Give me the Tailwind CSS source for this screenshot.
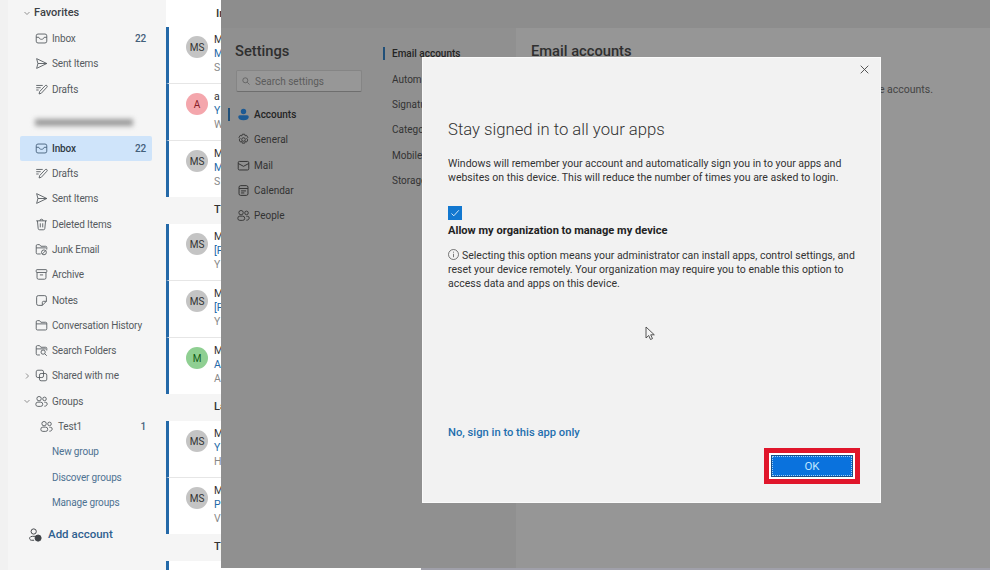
<!DOCTYPE html>
<html lang="en">

<head>
    <meta charset="UTF-8">
    <title>Settings</title>
    <script src="https://cdn.jsdelivr.net/npm/@tailwindcss/browser@4"></script>
</head>

<body class="bg-white overflow-hidden">
    <!-- icon set -->
    <svg class="hidden">
        <symbol id="i-inbox" viewBox="0 0 16 16" fill="none" stroke="currentColor" stroke-width="1.1">
            <rect x="1.5" y="2.5" width="13" height="11" rx="2.2" />
            <path d="M1.5 6.5h3.2c.4 1.6 1.7 2.5 3.3 2.5s2.9-.9 3.3-2.5h3.2" />
        </symbol>
        <symbol id="i-send" viewBox="0 0 16 16" fill="none" stroke="currentColor" stroke-width="1.1" stroke-linejoin="round">
            <path d="M2 2l12.5 6L2 14l1.6-6zM3.6 8h10.9" />
        </symbol>
        <symbol id="i-draft" viewBox="0 0 16 16" fill="none" stroke="currentColor" stroke-width="1.1" stroke-linejoin="round">
            <path d="M1.5 3h8M1.5 5.8h5.5M1.5 8.6h3M5 13.5l.8-3L12.6 3.2a1.4 1.4 0 0 1 2 2L7.8 12.6z" />
        </symbol>
        <symbol id="i-trash" viewBox="0 0 16 16" fill="none" stroke="currentColor" stroke-width="1.1">
            <path d="M1.5 3.5h13M6 3.5a2 2 0 0 1 4 0M3 3.5l.9 9.3a1.8 1.8 0 0 0 1.8 1.7h4.6a1.8 1.8 0 0 0 1.8-1.7l.9-9.3M6.5 6.5v5M9.5 6.5v5" />
        </symbol>
        <symbol id="i-junk" viewBox="0 0 16 16" fill="none" stroke="currentColor" stroke-width="1.1">
            <path d="M7 13.5H3A1.5 1.5 0 0 1 1.5 12V3.5A1.5 1.5 0 0 1 3 2h2.6l1.6 2h5.8a1.5 1.5 0 0 1 1.5 1.5V8M1.5 6h12" />
            <circle cx="11" cy="11.5" r="3" />
            <path d="M9 13.5l4-4" />
        </symbol>
        <symbol id="i-archive" viewBox="0 0 16 16" fill="none" stroke="currentColor" stroke-width="1.1">
            <rect x="1.5" y="2" width="13" height="3.5" rx="1" />
            <path d="M2.5 5.5v6.5A1.8 1.8 0 0 0 4.300 13.800h7.400A1.800 1.800 0 0 0 13.500 12V5.500M6 8.500h4" />
        </symbol>
        <symbol id="i-note" viewBox="0 0 16 16" fill="none" stroke="currentColor" stroke-width="1.1" stroke-linejoin="round">
            <path d="M4 2h8a2 2 0 0 1 2 2v5l-5 5H4a2 2 0 0 1-2-2V4a2 2 0 0 1 2-2zM14 9h-3.500A1.500 1.500 0 0 0 9 10.500V14" />
        </symbol>
        <symbol id="i-folder" viewBox="0 0 16 16" fill="none" stroke="currentColor" stroke-width="1.1">
            <path d="M3 2h2.600l1.600 2h5.800a1.500 1.500 0 0 1 1.500 1.500V12a1.500 1.500 0 0 1-1.500 1.500H3A1.500 1.500 0 0 1 1.500 12V3.500A1.500 1.500 0 0 1 3 2zM1.500 6h13" />
        </symbol>
        <symbol id="i-search-folder" viewBox="0 0 16 16" fill="none" stroke="currentColor" stroke-width="1.1">
            <path d="M6 13.500H3A1.500 1.500 0 0 1 1.500 12V3.500A1.500 1.500 0 0 1 3 2h2.600l1.600 2h5.800a1.500 1.500 0 0 1 1.500 1.500V8M1.500 6h12" />
            <circle cx="10" cy="10" r="2.600" />
            <path d="M12 12l2.500 2.500" />
        </symbol>
        <symbol id="i-shared" viewBox="0 0 16 16" fill="none" stroke="currentColor" stroke-width="1.1">
            <rect x="1.500" y="1.500" width="9" height="9" rx="2" />
            <rect x="5.500" y="5.500" width="9" height="9" rx="2" />
        </symbol>
        <symbol id="i-people" viewBox="0 0 16 16" fill="none" stroke="currentColor" stroke-width="1.1">
            <circle cx="5" cy="4.500" r="2.700" />
            <rect x="1" y="8.800" width="8.500" height="5.200" rx="2.500" />
            <circle cx="11.700" cy="4.800" r="2.200" />
            <path d="M11.500 9h1.500a2 2 0 0 1 2 2c0 1.800-1.500 2.800-3.500 2.800" />
        </symbol>
        <symbol id="i-gear" viewBox="0 0 16 16" fill="none" stroke="currentColor" stroke-width="1.1" stroke-linejoin="round">
            <circle cx="8" cy="8" r="2.200" />
            <path d="M6.500 1.500h3l.5 2 1.800-.6 1.500 2.600-1.400 1.500 1.400 1.500-1.500 2.600-1.800-.6-.5 2h-3l-.5-2-1.800.6-1.500-2.600L3.900 7 2.500 5.500 4 2.900l2 .6z" />
        </symbol>
        <symbol id="i-mail" viewBox="0 0 16 16" fill="none" stroke="currentColor" stroke-width="1.2">
            <rect x="1.500" y="3" width="13" height="10.500" rx="1.500" />
            <path d="M1.500 5.500L8 9l6.500-3.500" />
        </symbol>
        <symbol id="i-calendar" viewBox="0 0 16 16" fill="none" stroke="currentColor" stroke-width="1.2">
            <rect x="2.500" y="2" width="11" height="12" rx="2" />
            <path d="M2.500 5.500h11M5 8.500h6M5 11h4" />
        </symbol>
        <symbol id="i-add-account" viewBox="0 0 16 16" fill="none" stroke="currentColor" stroke-width="1.100">
            <circle cx="6.500" cy="4" r="3" />
            <path d="M7 14H4a2.200 2.200 0 0 1-2-3c.5-1 1.500-1.500 3-1.500h3" />
            <circle cx="11.500" cy="11.500" r="3.500" fill="currentColor" />
        </symbol>
        <symbol id="i-chev-down" viewBox="0 0 8 8" fill="none" stroke="currentColor" stroke-width=".8">
            <path d="M1.500 3l2.500 2.500L6.500 3" />
        </symbol>
        <symbol id="i-chev-right" viewBox="0 0 8 8" fill="none" stroke="currentColor" stroke-width=".8">
            <path d="M3 1.500L5.500 4 3 6.500" />
        </symbol>
    </svg>

    <div class="relative w-[990px] h-[570px] overflow-hidden flex font-['Roboto',sans-serif]">

        <!-- folder pane -->
        <aside class="w-[166px] h-full shrink-0 bg-[#f5f5f5] border-l-[8px] border-[#f1f1f1] text-[10px] tracking-[-0.15px] text-[#555b60]">
            <div class="h-[26px] flex items-center pl-[15px] gap-[3px] text-[11px] tracking-normal font-medium text-[#3d4145]">
                <svg class="w-[8px] h-[8px] text-[#777]"><use href="#i-chev-down" /></svg>Favorites
            </div>
            <div class="h-[25.300px] flex items-center pl-[27px] gap-[4px]"><svg class="w-[13px] h-[13px]"><use href="#i-inbox" /></svg><span>Inbox</span><span class="ml-auto mr-[20px] font-medium text-[#44607a]">22</span></div>
            <div class="h-[25.300px] flex items-center pl-[27px] gap-[4px]"><svg class="w-[13px] h-[13px]"><use href="#i-send" /></svg><span>Sent Items</span></div>
            <div class="h-[25.300px] flex items-center pl-[27px] gap-[4px]"><svg class="w-[13px] h-[13px]"><use href="#i-draft" /></svg><span>Drafts</span></div>

            <div class="h-[34px] flex items-center pl-[27px]">
                <div class="w-[98px] h-[7px] bg-[#9a9a9a] blur-[2.500px] mt-[8px]"></div>
            </div>

            <div class="h-[25px] ml-[12px] mr-[14px] flex items-center pl-[15px] gap-[4px] bg-[#cfe4fa] text-[#2f3a44] font-medium rounded-[2px]"><svg class="w-[13px] h-[13px] text-[#44607a]"><use href="#i-inbox" /></svg><span>Inbox</span><span class="ml-auto mr-[6px] text-[#44607a]">22</span></div>
            <div class="h-[25.300px] flex items-center pl-[27px] gap-[4px]"><svg class="w-[13px] h-[13px]"><use href="#i-draft" /></svg><span>Drafts</span></div>
            <div class="h-[25.300px] flex items-center pl-[27px] gap-[4px]"><svg class="w-[13px] h-[13px]"><use href="#i-send" /></svg><span>Sent Items</span></div>
            <div class="h-[25.300px] flex items-center pl-[27px] gap-[4px]"><svg class="w-[13px] h-[13px]"><use href="#i-trash" /></svg><span>Deleted Items</span></div>
            <div class="h-[25.300px] flex items-center pl-[27px] gap-[4px]"><svg class="w-[13px] h-[13px]"><use href="#i-junk" /></svg><span>Junk Email</span></div>
            <div class="h-[25.300px] flex items-center pl-[27px] gap-[4px]"><svg class="w-[13px] h-[13px]"><use href="#i-archive" /></svg><span>Archive</span></div>
            <div class="h-[25.300px] flex items-center pl-[27px] gap-[4px]"><svg class="w-[13px] h-[13px]"><use href="#i-note" /></svg><span>Notes</span></div>
            <div class="h-[25.300px] flex items-center pl-[27px] gap-[4px]"><svg class="w-[13px] h-[13px]"><use href="#i-folder" /></svg><span>Conversation History</span></div>
            <div class="h-[25.300px] flex items-center pl-[27px] gap-[4px]"><svg class="w-[13px] h-[13px]"><use href="#i-search-folder" /></svg><span>Search Folders</span></div>
            <div class="h-[25.300px] flex items-center pl-[15px] gap-[4px]"><svg class="w-[8px] h-[8px] text-[#777]"><use href="#i-chev-right" /></svg><svg class="w-[13px] h-[13px]"><use href="#i-shared" /></svg><span>Shared with me</span></div>
            <div class="h-[25.300px] flex items-center pl-[15px] gap-[4px]"><svg class="w-[8px] h-[8px] text-[#777]"><use href="#i-chev-down" /></svg><svg class="w-[13px] h-[13px]"><use href="#i-people" /></svg><span>Groups</span></div>
            <div class="h-[25.300px] flex items-center pl-[32px] gap-[5px]"><svg class="w-[13px] h-[13px]"><use href="#i-people" /></svg><span>Test1</span><span class="ml-auto mr-[20px] font-medium text-[#44607a]">1</span></div>
            <div class="h-[25.300px] flex items-center pl-[44px] text-[#4e7292]">New group</div>
            <div class="h-[25.300px] flex items-center pl-[44px] text-[#4e7292]">Discover groups</div>
            <div class="h-[25.300px] flex items-center pl-[44px] text-[#4e7292]">Manage groups</div>
            <div class="mt-[4px] h-[32px] flex items-center pl-[20px] gap-[6px] text-[11.500px] tracking-normal font-medium text-[#2f5f8f]"><svg class="w-[14px] h-[14px] text-[#3f4347]"><use href="#i-add-account" /></svg>Add account</div>
        </aside>

        <!-- message list, mostly behind the settings overlay -->
        <main class="flex-1 flex flex-col text-[10.500px] text-[#333]">
            <div class="h-[27px] flex items-center pl-[50px] text-[11.500px] font-medium">Inbox</div>

            <div class="h-[57px] flex border-l-[3px] border-[#2469a8] border-b border-b-[#e6e6e6]"><div class="w-[22px] h-[22px] ml-[17px] mt-[9px] rounded-full bg-[#c4c4c4] flex items-center justify-center text-[10px]">MS</div><div class="ml-[6px] pt-[6px] leading-[14px]"><div>M</div><div class="text-[#2469a8]">M</div><div class="text-[#888]">S</div></div></div>
            <div class="h-[57px] flex border-l-[3px] border-[#2469a8] border-b border-b-[#e6e6e6]"><div class="w-[22px] h-[22px] ml-[17px] mt-[9px] rounded-full bg-[#f4a6ac] flex items-center justify-center text-[10px] text-[#8a2028]">A</div><div class="ml-[6px] pt-[6px] leading-[14px]"><div>a</div><div class="text-[#2469a8]">Y</div><div class="text-[#888]">W</div></div></div>
            <div class="h-[56px] flex border-l-[3px] border-[#2469a8]"><div class="w-[22px] h-[22px] ml-[17px] mt-[9px] rounded-full bg-[#c4c4c4] flex items-center justify-center text-[10px]">MS</div><div class="ml-[6px] pt-[6px] leading-[14px]"><div>M</div><div class="text-[#2469a8]">M</div><div class="text-[#888]">S</div></div></div>
            <div class="h-[27px] flex items-center pl-[48px] bg-[#f5f5f5] text-[11px] font-medium">Th</div>

            <div class="h-[57px] flex border-l-[3px] border-[#2469a8] border-b border-b-[#e6e6e6]"><div class="w-[22px] h-[22px] ml-[17px] mt-[9px] rounded-full bg-[#c4c4c4] flex items-center justify-center text-[10px]">MS</div><div class="ml-[6px] pt-[6px] leading-[14px]"><div>M</div><div class="text-[#2469a8]">[F</div><div class="text-[#888]">Y</div></div></div>
            <div class="h-[57px] flex border-l-[3px] border-[#2469a8] border-b border-b-[#e6e6e6]"><div class="w-[22px] h-[22px] ml-[17px] mt-[9px] rounded-full bg-[#c4c4c4] flex items-center justify-center text-[10px]">MS</div><div class="ml-[6px] pt-[6px] leading-[14px]"><div>M</div><div class="text-[#2469a8]">[F</div><div class="text-[#888]">Y</div></div></div>
            <div class="h-[56px] flex border-l-[3px] border-[#2469a8]"><div class="w-[22px] h-[22px] ml-[17px] mt-[9px] rounded-full bg-[#8fcf92] flex items-center justify-center text-[10px] text-[#145c18]">M</div><div class="ml-[6px] pt-[6px] leading-[14px]"><div>M</div><div class="text-[#2469a8]">A</div><div class="text-[#888]">A</div></div></div>
            <div class="h-[27px] flex items-center pl-[48px] bg-[#f5f5f5] text-[11px] font-medium">La</div>

            <div class="h-[57px] flex border-l-[3px] border-[#2469a8] border-b border-b-[#e6e6e6]"><div class="w-[22px] h-[22px] ml-[17px] mt-[9px] rounded-full bg-[#c4c4c4] flex items-center justify-center text-[10px]">MS</div><div class="ml-[6px] pt-[6px] leading-[14px]"><div>M</div><div class="text-[#2469a8]">Y</div><div class="text-[#888]">H</div></div></div>
            <div class="h-[56px] flex border-l-[3px] border-[#2469a8]"><div class="w-[22px] h-[22px] ml-[17px] mt-[9px] rounded-full bg-[#c4c4c4] flex items-center justify-center text-[10px]">MS</div><div class="ml-[6px] pt-[6px] leading-[14px]"><div>M</div><div class="text-[#2469a8]">P</div><div class="text-[#888]">V</div></div></div>
            <div class="h-[27px] flex items-center pl-[48px] bg-[#f5f5f5] text-[11px] font-medium">Th</div>
            <div class="flex-1 border-l-[3px] border-[#2469a8]"></div>
        </main>

        <!-- settings overlay -->
        <div class="absolute left-[221px] top-0 w-[769px] h-[568px] bg-[#909090] flex flex-col text-[#333]">
            <div class="h-[28px] shrink-0 bg-[#8d8d8d]"></div>
            <div class="flex-1 flex">
                <div class="w-[154px] shrink-0 pl-[14px]">
                    <div class="mt-[13px] text-[14.700px] leading-[20px] font-medium text-[#2f2f2f]">Settings</div>
                    <div class="mt-[9px] ml-[1px] w-[126px] h-[22px] bg-[#979797] border border-[#858585] border-b-[#6e6e6e] rounded-[2px] flex items-center pl-[5px] gap-[5px] text-[10px] text-[#5c5c5c]">
                        <svg class="w-[8px] h-[8px]" viewBox="0 0 8 8" fill="none" stroke="currentColor" stroke-width=".8"><circle cx="3.300" cy="3.300" r="2.500" /><path d="M5.200 5.200L7.500 7.500" /></svg>
                        Search settings
                    </div>
                    <div class="mt-[10px] -ml-[7px] h-[25.300px] flex items-center text-[10px] font-medium text-[#242424]">
                        <div class="w-[2px] h-[13px] bg-[#204f78] mr-[7px]"></div>
                        <svg class="w-[13px] h-[13px] text-[#1c5a94] mr-[4px]" viewBox="0 0 16 16" fill="currentColor"><circle cx="8" cy="4.300" r="3.300" /><path d="M3.500 9h9a2 2 0 0 1 2 2c0 2.500-2.800 4-6.500 4s-6.500-1.500-6.500-4a2 2 0 0 1 2-2z" /></svg>
                        Accounts
                    </div>
                    <div class="h-[25.300px] flex items-center pl-[2px] text-[10px]"><svg class="w-[13px] h-[13px] mr-[4px]"><use href="#i-gear" /></svg>General</div>
                    <div class="h-[25.300px] flex items-center pl-[2px] text-[10px]"><svg class="w-[13px] h-[13px] mr-[4px]"><use href="#i-mail" /></svg>Mail</div>
                    <div class="h-[25.300px] flex items-center pl-[2px] text-[10px]"><svg class="w-[13px] h-[13px] mr-[4px]"><use href="#i-calendar" /></svg>Calendar</div>
                    <div class="h-[25.300px] flex items-center pl-[2px] text-[10px]"><svg class="w-[13px] h-[13px] mr-[4px]"><use href="#i-people" /></svg>People</div>
                </div>
                <div class="w-[141px] shrink-0 pt-[13px] text-[10px] whitespace-nowrap">
                    <div class="h-[25.400px] flex items-center pl-[8px] font-medium text-[#242424]"><div class="w-[2px] h-[13px] bg-[#204f78] mr-[7px]"></div>Email accounts</div>
                    <div class="h-[25.400px] flex items-center pl-[17px]">Automatic replies</div>
                    <div class="h-[25.400px] flex items-center pl-[17px]">Signatures</div>
                    <div class="h-[25.400px] flex items-center pl-[17px]">Categories</div>
                    <div class="h-[25.400px] flex items-center pl-[17px]">Mobile devices</div>
                    <div class="h-[25.400px] flex items-center pl-[17px]">Storage</div>
                </div>
                <div class="flex-1 bg-[#969696] pl-[15px]">
                    <div class="mt-[13px] text-[14.700px] leading-[20px] font-medium text-[#2f2f2f]">Email accounts</div>
                    <div class="mt-[21px] w-[402px] flex justify-end whitespace-nowrap text-[10.500px] text-[#444]">You can manage your email and delegate accounts.</div>
                </div>
            </div>
        </div>
        <div class="absolute left-[421px] top-[568px] w-[569px] h-[2px] bg-[#a0a0aa]"></div>

        <!-- stay signed in dialog -->
        <div class="absolute left-[422px] top-[57px] w-[459px] h-[446px] bg-[#f2f2f2] border border-[#fafafa] flex flex-col pl-[25px] text-[10.500px] leading-[14.200px] text-[#333]">
            <div class="flex justify-end pr-[11px] pt-[7px]">
                <svg class="w-[9px] h-[9px] text-[#444]" viewBox="0 0 9 9" fill="none" stroke="currentColor" stroke-width=".9"><path d="M.7.700l7.600 7.600M8.300.700L.7 8.300" /></svg>
            </div>
            <h1 class="mt-[44px] text-[16.700px] leading-[24px] font-light text-[#333]">Stay signed in to all your apps</h1>
            <p class="mt-[15px] w-[410px]">Windows will remember your account and automatically sign you in to your apps and websites on this device. This will reduce the number of times you are asked to login.</p>
            <div class="mt-[21px] w-[14px] h-[14px] bg-[#1278d0] flex items-center justify-center">
                <svg class="w-[10px] h-[10px]" viewBox="0 0 10 10" fill="none" stroke="#e8f3fc" stroke-width=".9"><path d="M1.500 5.500l2.300 2.300 5-5.500" /></svg>
            </div>
            <div class="mt-[4px] text-[11.100px] font-bold text-[#222]">Allow my organization to manage my device</div>
            <p class="mt-[10px] w-[410px]">
                <svg class="inline w-[11px] h-[11px] -mt-[3px] mr-[3px] text-[#444]" viewBox="0 0 11 11" fill="none" stroke="currentColor" stroke-width=".7"><circle cx="5.500" cy="5.500" r="5" /><path d="M5.500 4.800v3.400M5.500 2.700v1" /></svg>Selecting this option means your administrator can install apps, control settings, and reset your device remotely. Your organization may require you to enable this option to access data and apps on this device.
            </p>
            <a class="mt-[135px] text-[11.200px] font-medium text-[#1f6fae]">No, sign in to this app only</a>
            <div class="mt-[8px] ml-[316px] w-[96px] h-[36px] border-[5px] border-[#e0162b] bg-white p-[2px]">
                <div class="h-full bg-[#0a72dd] border border-[#1b4f86] outline-1 outline-dotted -outline-offset-2 outline-[#9ed0f5] flex items-center justify-center text-[11.500px] text-[#bfe6ff]">OK</div>
            </div>
        </div>

        <!-- mouse pointer -->
        <svg class="absolute left-[645px] top-[326px] w-[11px] h-[15px]" viewBox="0 0 11 15" fill="#f5f5f5" stroke="#444" stroke-width=".9" stroke-linejoin="round"><path d="M1 1v11l2.700-2.500 1.800 4 2-.9-1.800-3.800h3.600z" /></svg>
    </div>
</body>

</html>
